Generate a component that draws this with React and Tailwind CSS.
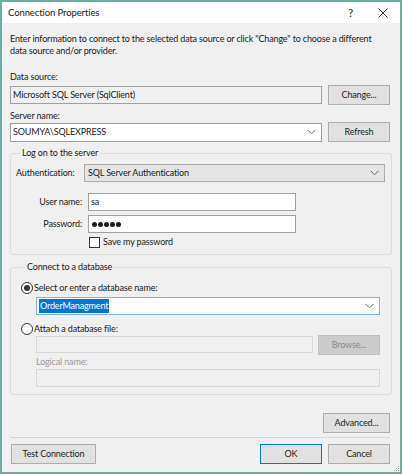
import React from 'react';

const font = { fontFamily: 'Lato, "Noto Sans", sans-serif' };

const Chevron = ({ color = '#6d6d6d' }) => (
  <svg width="9" height="6" viewBox="0 0 9 6" className="shrink-0">
    <polyline points="0.5,0.8 4.5,4.8 8.5,0.8" fill="none" stroke={color} strokeWidth="1" />
  </svg>
);

const Button = ({ children, className = '', disabled = false, primary = false }) => (
  <div
    className={`flex items-center justify-center h-[20px] border ${
      disabled
        ? 'bg-[#cccccc] border-[#bfbfbf] text-[#8a8a8a]'
        : primary
        ? 'bg-[#e1e1e1] border-[#0078d7] text-[#1e1e1e]'
        : 'bg-[#e1e1e1] border-[#adadad] text-[#1e1e1e]'
    } ${className}`}
  >
    {children}
  </div>
);

const Radio = ({ checked }) => (
  <div className="w-[12px] h-[12px] rounded-full border border-[#333] bg-white flex items-center justify-center shrink-0">
    {checked && <div className="w-[6px] h-[6px] rounded-full bg-[#333]" />}
  </div>
);

export default function App() {
  return (
    <div
      className="w-[402px] h-[474px] border-2 border-[#6aaea6] bg-[#f0f0f0] flex flex-col text-[9px] leading-[12px] tracking-[-0.15px] text-[#1a1a1a] overflow-hidden"
      style={font}
    >
      {/* Title bar */}
      <div className="h-[21px] bg-white flex items-center pl-[6px] pr-[12px] shrink-0">
        <span className="text-[9.5px] tracking-[-0.1px]">Connection Properties</span>
        <span className="ml-auto mr-[25px] text-[11px]">?</span>
        <svg width="10" height="10" viewBox="0 0 10 10">
          <line x1="0.5" y1="0.5" x2="9.5" y2="9.5" stroke="#333" strokeWidth="1" />
          <line x1="9.5" y1="0.5" x2="0.5" y2="9.5" stroke="#333" strokeWidth="1" />
        </svg>
      </div>

      <div className="flex-1 flex flex-col pl-[8px] pr-[10px] pt-[10px] relative">
        <p>
          Enter information to connect to the selected data source or click "Change" to choose a different data source and/or provider.
        </p>

        <div className="mt-[14px]">Data source:</div>
        <div className="mt-[2px] h-[20px] flex items-center gap-[6px]">
          <div className="flex-1 h-[18px] border border-[#a0a0a0] bg-[#f0f0f0] flex items-center px-[2px]">
            Microsoft SQL Server (SqlClient)
          </div>
          <Button className="w-[62px]">Change...</Button>
        </div>

        <div className="mt-[5px]">Server name:</div>
        <div className="h-[20px] flex items-center gap-[6px]">
          <div className="flex-1 h-[19px] border border-[#a0a0a0] bg-white flex items-center pl-[2px] pr-[5px]">
            <span className="flex-1">SOUMYA\SQLEXPRESS</span>
            <Chevron />
          </div>
          <Button className="w-[62px]">Refresh</Button>
        </div>

        {/* Log on group */}
        <fieldset className="mt-[5px] mr-[-2px] border border-[#dcdcdc] rounded-[3px] pl-[5px] pr-[6px] pb-[6px]">
          <legend className="ml-[4px] px-[2px]">Log on to the server</legend>
          <div className="mt-[4px] h-[20px] flex items-center">
            <span className="w-[68px]">Authentication:</span>
            <div className="flex-1 h-[18px] border border-[#acacac] bg-[#e5e5e5] flex items-center pl-[3px] pr-[5px]">
              <span className="flex-1">SQL Server Authentication</span>
              <Chevron />
            </div>
          </div>
          <div className="mt-[9px] h-[20px] flex items-center">
            <span className="w-[66px] text-right">User name:</span>
            <div className="ml-[6px] w-[208px] h-[18px] border border-[#a0a0a0] bg-white flex items-center px-[2px]">
              sa
            </div>
          </div>
          <div className="mt-[2px] h-[20px] flex items-center">
            <span className="w-[66px] text-right">Password:</span>
            <div className="ml-[6px] w-[208px] h-[18px] border border-[#a0a0a0] bg-white flex items-center px-[3px] gap-[1px]">
              {[0, 1, 2, 3, 4].map((i) => (
                <div key={i} className="w-[5px] h-[5px] rounded-full bg-[#1e1e1e]" />
              ))}
            </div>
          </div>
          <div className="mt-[2px] h-[12px] flex items-center pl-[73px] gap-[3px]">
            <div className="w-[11px] h-[11px] border border-[#333] bg-white" />
            <span>Save my password</span>
          </div>
        </fieldset>

        {/* Connect group */}
        <fieldset className="mt-[6px] mr-[-2px] border border-[#dcdcdc] rounded-[3px] pl-[10px] pr-[11px] pb-[7px]">
          <legend className="ml-[4px] px-[2px]">Connect to a database</legend>
          <div className="mt-[9px] h-[12px] flex items-center gap-[1px]">
            <Radio checked />
            <span>Select or enter a database name:</span>
          </div>
          <div className="mt-[3px] ml-[15px] h-[18px] border border-[#7eb4ea] bg-white flex items-center pl-[2px] pr-[5px]">
            <span className="bg-[#0078d7] text-white px-[1px] leading-[14px]">OrderManagment</span>
            <span className="flex-1" />
            <Chevron />
          </div>
          <div className="mt-[8px] h-[12px] flex items-center gap-[1px]">
            <Radio />
            <span>Attach a database file:</span>
          </div>
          <div className="ml-[15px] h-[19px] flex items-center gap-[5px]">
            <div className="flex-1 h-[17px] border border-[#d9d9d9] bg-[#f0f0f0]" />
            <Button disabled className="w-[62px] h-[19px]">Browse...</Button>
          </div>
          <div className="mt-[2px] ml-[15px] text-[#9a9a9a]">Logical name:</div>
          <div className="mt-[1px] ml-[15px] h-[18px] border border-[#d9d9d9] bg-[#f0f0f0]" />
        </fieldset>

        <div className="mt-[18px] flex justify-end">
          <Button className="w-[67px]">Advanced...</Button>
        </div>

        <div className="mt-[4px] h-px bg-[#d4d4d4]" />

        <div className="mt-[6px] flex items-center">
          <Button className="w-[85px] ml-[1px]">Test Connection</Button>
          <Button primary className="w-[62px] ml-auto">OK</Button>
          <Button className="w-[62px] ml-[6px]">Cancel</Button>
        </div>

        {/* size grip */}
        <div className="absolute right-[1px] bottom-[1px] grid grid-cols-3 gap-[1px]">
          {[0, 0, 1, 0, 1, 1, 1, 1, 1].map((v, i) => (
            <div key={i} className={`w-[1px] h-[1px] ${v ? 'bg-[#a0a0a0]' : ''}`} />
          ))}
        </div>
      </div>
    </div>
  );
}
